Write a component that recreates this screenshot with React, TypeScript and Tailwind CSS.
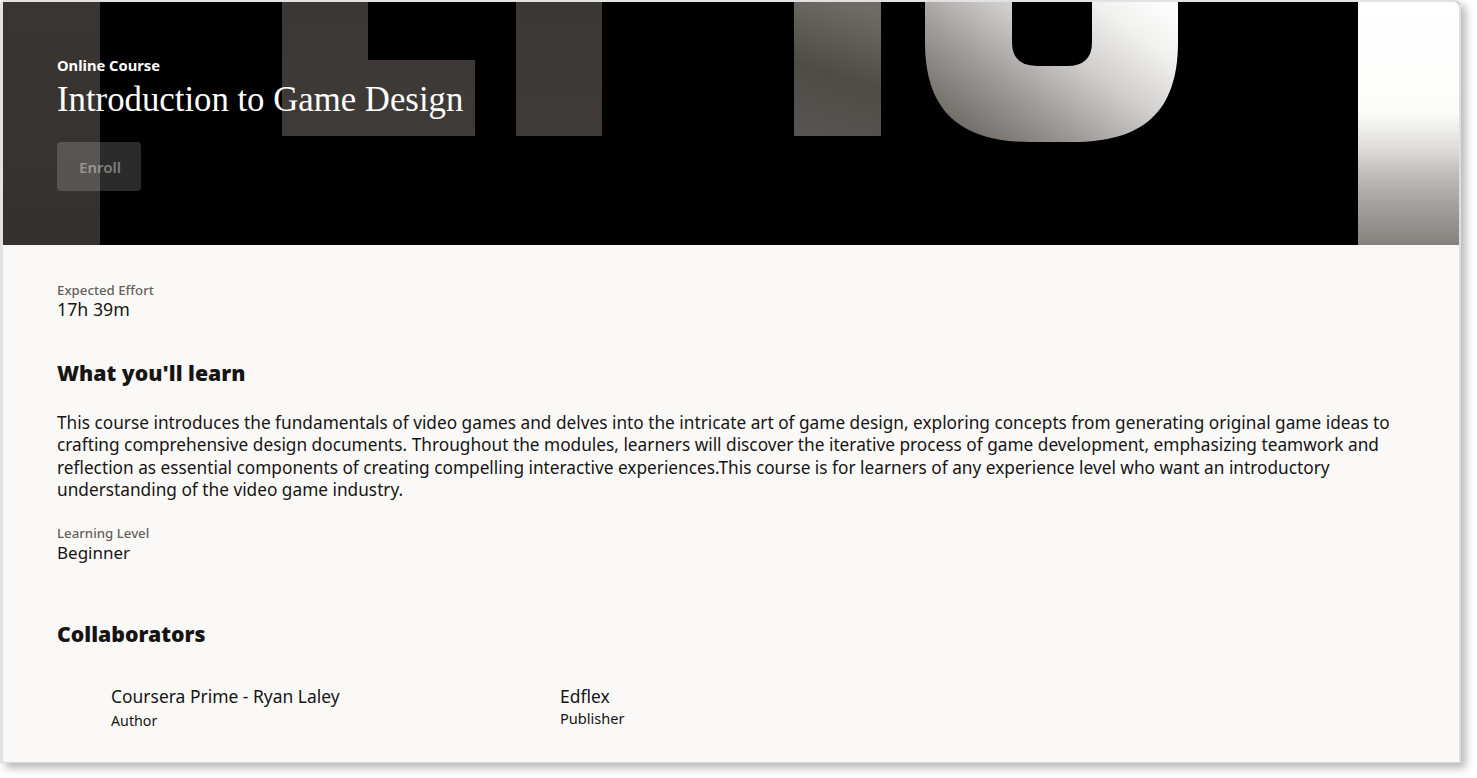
export default function App() {
  return (
    <div className="h-[778px] w-[1477px] overflow-hidden bg-white font-['Noto_Sans',sans-serif]">
      <div className="flex h-[763px] w-[1461px] flex-col overflow-hidden rounded-tr-[6px] rounded-tl-[4px] border-t-2 border-r-2 border-b border-l-[3px] border-t-[#e2e2e2] border-r-[#dedede] border-b-[#d8d8d8] border-l-[#e2e2e2] bg-[#fbf9f8] text-[#161513] shadow-[5px_5px_8px_rgba(0,0,0,0.28)]">
        <div className="relative h-[243px] shrink-0 bg-black">
          <svg className="absolute inset-0" width="1456" height="243" viewBox="0 0 1456 243">
            <defs>
              <linearGradient id="a" x1="0" y1="0" x2="0" y2="1">
                <stop offset="0" stopColor="#393532" />
                <stop offset="1" stopColor="#35312e" />
              </linearGradient>
              <linearGradient id="b" x1="0" y1="0" x2="0" y2="1">
                <stop offset="0" stopColor="#3c3835" />
                <stop offset="1" stopColor="#3e3a37" />
              </linearGradient>
              <linearGradient id="c" x1="0.6" y1="0" x2="0.4" y2="1">
                <stop offset="0" stopColor="#6f6b67" />
                <stop offset="0.55" stopColor="#4f4b47" />
                <stop offset="1" stopColor="#575350" />
              </linearGradient>
              <linearGradient id="u" gradientUnits="userSpaceOnUse" x1="970" y1="140" x2="1108" y2="-44">
                <stop offset="0" stopColor="#6e6a66" />
                <stop offset="0.3" stopColor="#a09d9b" />
                <stop offset="0.55" stopColor="#cfcdcc" />
                <stop offset="0.8" stopColor="#f0f0ef" />
                <stop offset="1" stopColor="#ffffff" />
              </linearGradient>
              <linearGradient id="r" x1="0" y1="0" x2="0" y2="1">
                <stop offset="0" stopColor="#ffffff" />
                <stop offset="0.45" stopColor="#fcfcfb" />
                <stop offset="0.6" stopColor="#dedddc" />
                <stop offset="0.72" stopColor="#bcbab8" />
                <stop offset="0.85" stopColor="#a09d9b" />
                <stop offset="1" stopColor="#85817d" />
              </linearGradient>
            </defs>
            <rect x="0" y="0" width="97" height="243" fill="url(#a)" />
            <path d="M279 0H365V58H472V134H279Z" fill="url(#b)" />
            <rect x="513" y="0" width="86" height="134" fill="url(#b)" />
            <rect x="791" y="0" width="87" height="134" fill="url(#c)" />
            <path d="M922 0H1009V40Q1009 64 1034 64H1064Q1089 64 1089 40V0H1175V40C1175 110 1140 140 1070 140H1028C958 140 922 110 922 40Z" fill="url(#u)" />
            <rect x="1355" y="0" width="101" height="243" fill="url(#r)" />
          </svg>
          <div className="relative px-[54px] pt-[54px]">
            <div className="text-[14.7px] leading-[19px] font-bold text-white">Online Course</div>
            <h1 className="mt-[5px] font-['Liberation_Serif',serif] text-[34.75px] leading-[40px] font-normal text-white">Introduction to Game Design</h1>
            <button className="mt-[22px] h-[49px] w-[84px] rounded-[4px] bg-[#ffffff2b] pt-[1px] pl-[2px] text-[15px] font-semibold text-[#ffffff66]">Enroll</button>
          </div>
        </div>
        <div className="flex flex-col px-[54px]">
          <div className="mt-[37px] text-[13.25px] leading-[16px] font-medium text-[#655f5a]">Expected Effort</div>
          <div className="text-[17.75px] leading-[22px]">17h 39m</div>
          <h2 className="mt-[38px] text-[21.25px] leading-[30px] font-black">What you'll learn</h2>
          <p className="mt-[24px] w-[1345px] text-[17.25px] leading-[22.4px]">
            This course introduces the fundamentals of video games and delves into the intricate art of game design, exploring concepts from generating original game ideas to crafting comprehensive design documents. Throughout the modules, learners will discover the iterative process of game development, emphasizing teamwork and reflection as essential components of creating compelling interactive experiences.This course is for learners of any experience level who want an introductory understanding of the video game industry.
          </p>
          <div className="mt-[23px] text-[13.25px] leading-[16px] font-medium text-[#655f5a]">Learning Level</div>
          <div className="mt-[1px] text-[17px] leading-[22px]">Beginner</div>
          <h2 className="mt-[55px] text-[21.25px] leading-[30px] font-black">Collaborators</h2>
          <div className="mt-[36px] flex">
            <div className="ml-[54px] w-[449px]">
              <div className="text-[17.45px] leading-[22px]">Coursera Prime - Ryan Laley</div>
              <div className="mt-[5px] text-[14.25px] leading-[18px]">Author</div>
            </div>
            <div>
              <div className="text-[17.45px] leading-[22px]">Edflex</div>
              <div className="mt-[2px] text-[14.6px] leading-[18px]">Publisher</div>
            </div>
          </div>
        </div>
      </div>
    </div>
  );
}
